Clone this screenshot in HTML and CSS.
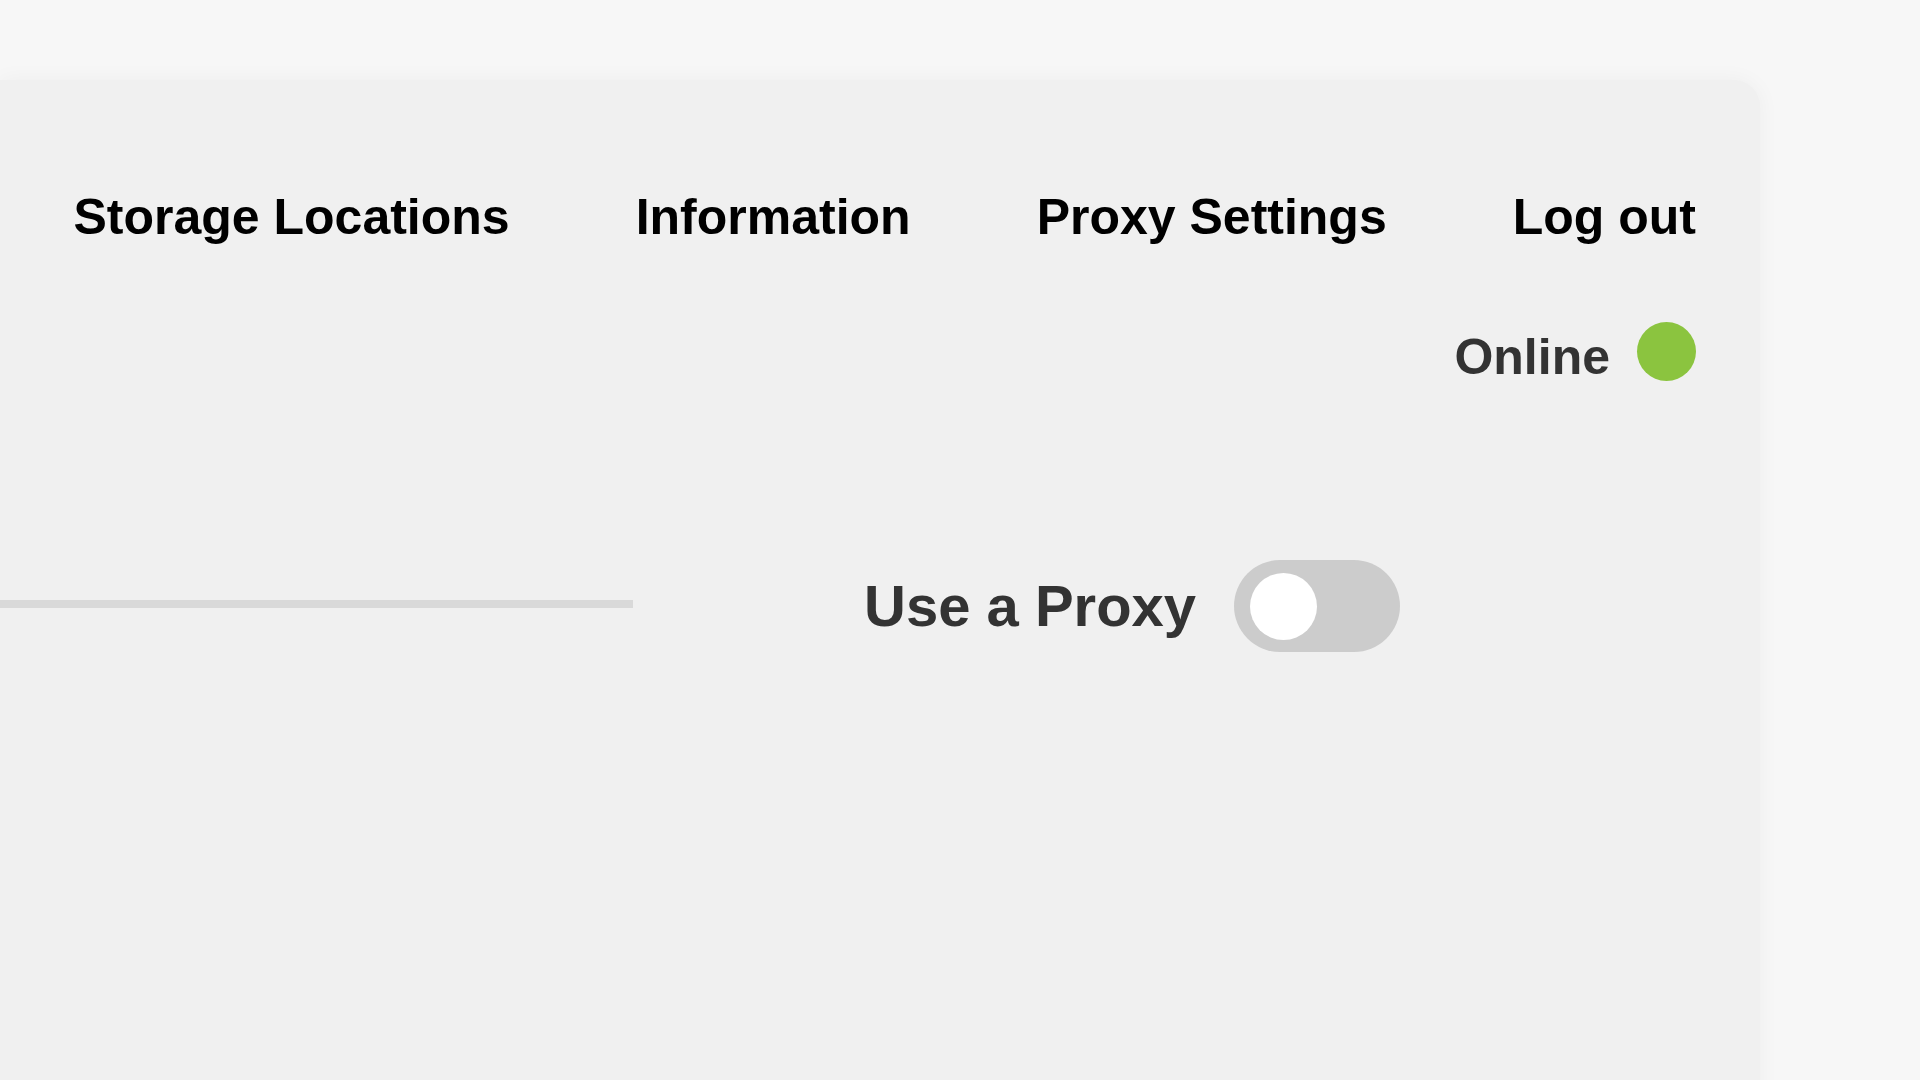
FILE: index.html
```html
<!DOCTYPE html>
<html lang="en">
<head>
    <meta charset="UTF-8">
    <meta name="viewport" content="width=device-width, initial-scale=1.0">
    <title>Proxy Settings</title>
    <link rel="stylesheet" href="styles.css">
</head>
<body>

    <!-- Main panel -->
    <div class="panel">
        <!-- Top navigation -->
        <nav class="nav">
            <a href="#">Storage Locations</a>
            <a href="#">Information</a>
            <a href="#">Proxy Settings</a>
            <a href="#">Log out</a>
        </nav>

        <!-- Connection status -->
        <div class="status">
            <span class="status-text">Online</span>
            <span class="status-dot"></span>
        </div>

        <!-- Proxy toggle -->
        <div class="proxy-row">
            <div class="proxy-line"></div>
            <label class="proxy-label" for="useProxy">Use a Proxy</label>
            <label class="switch">
                <input type="checkbox" id="useProxy">
                <span class="knob"></span>
            </label>
        </div>
    </div>

</body>
</html>
```
FILE: styles.css
```css
/* General Reset */
body, nav, a, label, span, div {
    margin: 0;
    padding: 0;
    font-family: "Liberation Sans", Arial, sans-serif;
}
body {
    background-color: #f7f7f7;
    overflow: hidden;
    height: 100vh;
}
.panel {
    margin: 80px 160px 0 0;
    min-height: 1100px;
    padding: 107px 64px 0 0;
    background-color: #f0f0f0;
    border-radius: 0 26px 0 0;
    box-shadow: 0 0 22px rgba(0, 0, 0, 0.045);
}
.nav {
    display: flex;
    justify-content: flex-end;
    gap: 126px;
    font-size: 50px;
    font-weight: bold;
    line-height: 60px;
}
.nav a {
    color: #000;
    text-decoration: none;
}
.status {
    display: flex;
    justify-content: flex-end;
    align-items: flex-start;
    gap: 27px;
    margin-top: 75px;
}
.status-text {
    margin-top: 5px;
    font-size: 50px;
    font-weight: bold;
    line-height: 60px;
    color: #333;
}
.status-dot {
    width: 59px;
    height: 59px;
    border-radius: 50%;
    background-color: #8bc43f;
}
.proxy-row {
    display: flex;
    align-items: center;
    margin-top: 173px;
}
.proxy-line {
    width: 633px;
    height: 8px;
    margin-bottom: 4px;
    background-color: #d9d9d9;
}
.proxy-label {
    margin-left: 231px;
    font-size: 58px;
    font-weight: bold;
    line-height: 70px;
    color: #333;
}
.switch {
    display: flex;
    align-items: center;
    width: 166px;
    height: 92px;
    margin-left: 38px;
    padding-left: 16px;
    box-sizing: border-box;
    border-radius: 46px;
    background-color: #cccccc;
    cursor: pointer;
}
.switch input {
    display: none;
}
.knob {
    width: 67px;
    height: 67px;
    border-radius: 50%;
    background-color: white;
}
```
